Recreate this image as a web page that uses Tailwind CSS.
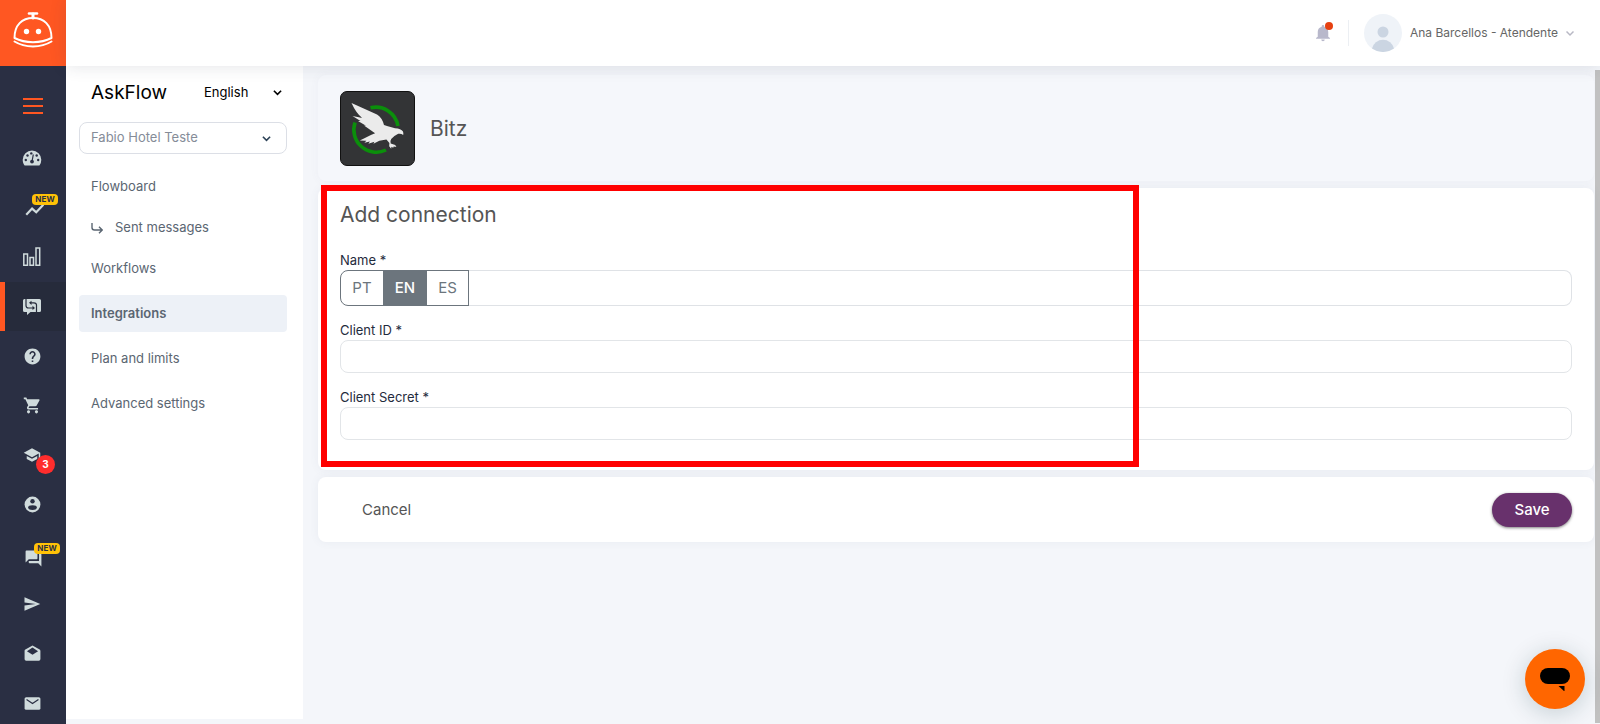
<!DOCTYPE html>
<html lang="en">

<head>
  <meta charset="UTF-8">
  <meta name="viewport" content="width=device-width, initial-scale=1.0">
  <title>AskFlow - Integrations</title>
  <script src="https://cdn.jsdelivr.net/npm/@tailwindcss/browser@4"></script>
</head>

<body class="flex h-screen overflow-hidden bg-[#f4f6fa] font-['Inter','Noto_Sans',sans-serif] text-[13px] text-[#5b6672]">

<!-- Icon sidebar -->
<aside class="flex w-[66px] shrink-0 flex-col overflow-hidden bg-[#2a2f43] text-[#d0dbdc]">
  <a href="#" aria-label="Home" class="flex h-[66px] shrink-0 items-start justify-center bg-[#ff5722] pt-3">
    <svg class="h-9 w-10" viewBox="0 0 40 36" fill="none" stroke="#fff" stroke-width="2" stroke-linecap="round">
      <path d="M16 1.500h8" stroke-width="2.600" />
      <path d="M20 2v4" stroke-width="3" />
      <path d="M1.500 26C1.500 13 9 6 20 6s18.500 7 18.500 20C28 31.500 12 31.500 1.500 26z" stroke-linejoin="round" />
      <path d="M1.500 29.500C12 36 28 36 38.500 29.500" />
      <circle cx="13.500" cy="19.500" r="2.700" fill="#fff" stroke="none" />
      <circle cx="25.500" cy="19.500" r="2.700" fill="#fff" stroke="none" />
    </svg>
  </a>
  <button type="button" aria-label="Toggle menu" class="flex h-[67px] shrink-0 items-center justify-center pt-3">
    <svg class="h-4 w-5" viewBox="0 0 20 16" stroke="#ff5722" stroke-width="2"><path d="M0 1h20M0 8h20M0 15h20" /></svg>
  </button>
  <nav class="-mb-1 flex flex-1 flex-col">
    <a href="#" aria-label="Dashboard" class="flex flex-1 items-center justify-center pr-[2px]">
      <svg class="h-5 w-5" viewBox="0 0 20 20">
        <path fill="currentColor" d="M10 2.500a9.300 9.300 0 0 0-9.300 9.300c0 2 .6 3.900 1.700 5.400.2.300.5.400.8.400h13.600c.3 0 .6-.1.800-.4a9.300 9.300 0 0 0 1.700-5.400A9.300 9.300 0 0 0 10 2.500z" />
        <g fill="#2a2f43">
          <circle cx="5.500" cy="7.500" r="1.200" /><circle cx="3.800" cy="12" r="1.200" /><circle cx="16.200" cy="12" r="1.200" />
          <circle cx="14.700" cy="7.500" r="1.200" /><circle cx="9.300" cy="5.400" r="1.200" /><circle cx="10" cy="13.600" r="1.900" />
        </g>
        <path stroke="#2a2f43" stroke-width="1.200" d="M10 13.500l1.300-7" />
      </svg>
    </a>
    <a href="#" aria-label="Analytics" class="relative flex flex-1 items-center justify-center">
      <svg class="mt-1 ml-1 h-5 w-5" viewBox="0 0 24 24" fill="none" stroke="currentColor" stroke-width="2.600"><path d="M1.500 19l7-7.500 5 4.500L22 7" /></svg>
      <span class="absolute top-[11px] right-2 rounded bg-[#ffc107] px-[3px] text-[8px] leading-[11px] font-bold tracking-wide text-[#2a2f43]">NEW</span>
    </a>
    <a href="#" aria-label="Reports" class="flex flex-1 items-center justify-center pr-[2px]">
      <svg class="h-5 w-5" viewBox="0 0 20 20" fill="none" stroke="currentColor" stroke-width="1.500"><path d="M1.800 7h3.700v11.200H1.800zM8 10.500h3.500v7.700H8zM14 1h3.700v17.200H14z" /></svg>
    </a>
    <a href="#" aria-label="AskFlow" class="flex flex-1 items-center justify-center border-l-5 border-[#ff5722] bg-[#262b3b] pr-[7px]">
      <svg class="h-5 w-5" viewBox="0 0 20 20">
        <path fill="currentColor" d="M2.500 2h15A1.500 1.500 0 0 1 19 3.500v10a1.500 1.500 0 0 1-1.500 1.500H8.500L5 18v-3H2.500A1.500 1.500 0 0 1 1 13.500v-10A1.500 1.500 0 0 1 2.500 2z" />
        <path fill="none" stroke="#262b3b" stroke-width="1.200" d="M4 2v6.500Q4 11 6.500 11H11M14.500 15V8Q14.500 5.800 12 5.800H9" />
        <path fill="#262b3b" d="M10.500 8.800V13l2.500-2zM9.500 3.700V8L7 5.800z" />
      </svg>
    </a>
    <a href="#" aria-label="Help" class="flex flex-1 items-center justify-center pr-[2px]">
      <svg class="h-[19px] w-[19px]" viewBox="0 0 24 24" fill="currentColor"><path d="M12 2C6.480 2 2 6.480 2 12s4.480 10 10 10 10-4.480 10-10S17.520 2 12 2zm1 17h-2v-2h2v2zm2.070-7.750l-.9.920C13.450 12.900 13 13.500 13 15h-2v-.5c0-1.100.45-2.100 1.170-2.830l1.240-1.260c.37-.36.59-.86.59-1.410 0-1.100-.9-2-2-2s-2 .9-2 2H8c0-2.210 1.790-4 4-4s4 1.790 4 4c0 .88-.36 1.680-.93 2.250z" /></svg>
    </a>
    <a href="#" aria-label="Store" class="flex flex-1 items-center justify-center pr-[2px]">
      <svg class="h-[19px] w-[19px]" viewBox="0 0 24 24" fill="currentColor"><path d="M7 18c-1.100 0-1.990.9-1.990 2S5.900 22 7 22s2-.9 2-2-.9-2-2-2zM1 2v2h2l3.600 7.590-1.350 2.450c-.16.28-.25.61-.25.960 0 1.100.9 2 2 2h12v-2H7.420c-.14 0-.25-.11-.25-.25l.03-.12.9-1.630h7.450c.75 0 1.410-.41 1.750-1.030l3.580-6.490c.08-.14.12-.31.12-.480 0-.55-.45-1-1-1H5.210l-.94-2H1zm16 16c-1.100 0-1.990.9-1.990 2s.89 2 1.990 2 2-.9 2-2-.9-2-2-2z" /></svg>
    </a>
    <a href="#" aria-label="Academy" class="relative flex flex-1 items-center justify-center pr-[2px]">
      <svg class="h-[18px] w-[18px]" viewBox="0 0 24 24" fill="currentColor"><path d="M5 13.180v4L12 21l7-3.820v-4L12 17l-7-3.820zM12 3L1 9l11 6 9-4.910V17h2V9L12 3z" /></svg>
      <span class="absolute right-[11px] bottom-[6px] flex h-[19px] w-[19px] items-center justify-center rounded-full bg-[#ff2d2d] text-[10px] font-bold text-white">3</span>
    </a>
    <a href="#" aria-label="Contacts" class="flex flex-1 items-center justify-center pr-[2px]">
      <svg class="h-[19px] w-[19px]" viewBox="0 0 24 24"><path fill="currentColor" d="M12 2a10 10 0 1 0 0 20 10 10 0 0 0 0-20z" /><circle cx="12" cy="8" r="2.800" fill="#2a2f43" /><ellipse cx="12" cy="15.800" rx="5.500" ry="3" fill="#2a2f43" /></svg>
    </a>
    <a href="#" aria-label="Conversations" class="relative flex flex-1 items-center justify-center">
      <svg class="mt-2 h-[19px] w-[19px]" viewBox="0 0 24 24" fill="currentColor"><path d="M21 6h-2v9H6v2c0 .55.45 1 1 1h11l4 4V7c0-.55-.45-1-1-1zm-4 6V3c0-.55-.45-1-1-1H3c-.55 0-1 .45-1 1v14l4-4h10c.55 0 1-.45 1-1z" /></svg>
      <span class="absolute top-[13px] right-[6px] rounded bg-[#ffc107] px-[3px] text-[8px] leading-[11px] font-bold tracking-wide text-[#2a2f43]">NEW</span>
    </a>
    <a href="#" aria-label="Campaigns" class="flex flex-1 items-center justify-center pr-[2px]">
      <svg class="h-[18px] w-[18px]" viewBox="0 0 24 24" fill="currentColor"><path d="M2.010 21L23 12 2.010 3 2 10l15 2-15 2z" /></svg>
    </a>
    <a href="#" aria-label="Drafts" class="flex flex-1 items-center justify-center pr-[2px]">
      <svg class="h-[19px] w-[19px]" viewBox="0 0 24 24"><path fill="currentColor" d="M12 2L3 7q-1 .6-1 1.800V19a2 2 0 0 0 2 2h16a2 2 0 0 0 2-2V8.800Q22 7.600 21 7z" /><path fill="#2a2f43" d="M12 4.500L19 9l-7 4.500L5 9z" /></svg>
    </a>
    <a href="#" aria-label="Mail" class="flex flex-1 items-center justify-center pr-[2px]">
      <svg class="h-[19px] w-[19px]" viewBox="0 0 24 24" fill="currentColor"><path d="M20 4H4a2 2 0 0 0-2 2v12a2 2 0 0 0 2 2h16a2 2 0 0 0 2-2V6a2 2 0 0 0-2-2z" /><path fill="none" stroke="#2a2f43" stroke-width="1.500" d="M4.500 7l7.500 5 7.500-5" /></svg>
    </a>
  </nav>
</aside>

<div class="flex min-w-0 flex-1 flex-col">
  <!-- Top bar -->
  <header class="z-10 flex h-[66px] shrink-0 items-center justify-end bg-white pr-[26px] shadow-[0_0_16px_rgba(50,55,75,0.14)]">
    <button type="button" aria-label="Notifications" class="relative mr-4">
      <svg class="h-[18px] w-[18px]" viewBox="0 0 24 24" fill="#b8b8cb"><path d="M12 23c1.300 0 2.300-.9 2.300-2.200H9.700C9.700 22.100 10.700 23 12 23zm7-6v-6.500c0-3.300-2-6-5.300-6.700V3a1.700 1.700 0 0 0-3.400 0v.8C7 4.500 5 7.200 5 10.500V17l-2.300 1.800v1h18.600v-1z" /></svg>
      <span class="absolute -top-[2px] -right-[1px] h-2 w-2 rounded-full bg-[#e64010]"></span>
    </button>
    <div class="mr-[15px] h-[26px] w-px bg-[#eceff3]"></div>
    <button type="button" class="flex items-center text-xs text-[#666]">
      <svg class="mr-2 h-[38px] w-[38px]" viewBox="0 0 38 38">
        <circle cx="19" cy="19" r="19" fill="#eff3f8" />
        <circle cx="19" cy="18" r="5.500" fill="#cbd5e2" />
        <path fill="#cbd5e2" d="M8 34.500a11.300 11.300 0 0 1 22 0A19 19 0 0 1 8 34.500z" />
      </svg>
      Ana Barcellos - Atendente
      <svg class="ml-2 h-2 w-2" viewBox="0 0 8 8" fill="none" stroke="#b8b8c4" stroke-width="1.500"><path d="M.5 2.500L4 6l3.500-3.500" /></svg>
    </button>
  </header>

  <div class="flex min-h-0 flex-1">
    <!-- AskFlow menu -->
    <aside class="mb-[5px] w-[237px] shrink-0 bg-white pt-[14px] pr-4 pl-[13px]">
      <div class="flex items-center justify-between pr-[5px] pl-3">
        <h1 class="text-[19px] leading-[26px] text-black">AskFlow</h1>
        <div class="relative">
          <select aria-label="Language" class="block w-[78px] appearance-none bg-transparent pb-[2px] leading-5 text-black">
            <option>English</option>
          </select>
          <svg class="pointer-events-none absolute top-1.5 right-0 h-[9px] w-[9px]" viewBox="0 0 10 10" fill="none" stroke="#000" stroke-width="1.800"><path d="M1 3l4 4 4-4" /></svg>
        </div>
      </div>
      <div class="relative mt-4">
        <select aria-label="Hotel" class="block h-8 w-full appearance-none rounded-lg border border-[#dcdfe6] bg-white px-[11px] text-[#858c98]">
          <option>Fabio Hotel Teste</option>
        </select>
        <svg class="pointer-events-none absolute top-3 right-4 h-[9px] w-[9px]" viewBox="0 0 10 10" fill="none" stroke="#2c4257" stroke-width="1.800"><path d="M1 3l4 4 4-4" /></svg>
      </div>
      <nav class="mt-[14px] flex flex-col gap-2">
        <div class="flex flex-col gap-1">
          <a href="#" class="flex h-[37px] items-center px-3">Flowboard</a>
          <a href="#" class="flex h-[37px] items-center px-3">
            <svg class="mr-3 h-3 w-3" viewBox="0 0 12 12" fill="none" stroke="currentColor" stroke-width="1.400"><path d="M1 1v4.500Q1 8 3.500 8H11M8 4.800L11.200 8 8 11.200" /></svg>
            Sent messages
          </a>
          <a href="#" class="flex h-[37px] items-center px-3">Workflows</a>
        </div>
        <a href="#" class="flex h-[37px] items-center rounded-sm bg-[#edf1f7] px-3 font-semibold">Integrations</a>
        <a href="#" class="flex h-[37px] items-center px-3">Plan and limits</a>
        <a href="#" class="flex h-[37px] items-center px-3">Advanced settings</a>
      </nav>
    </aside>

    <!-- Connection form -->
    <main class="min-w-0 flex-1 pt-[9px] pr-px pl-[15px]">
      <form class="flex flex-col gap-[7px]">
        <section class="flex items-center gap-[15px] rounded-lg bg-[#f5f7fb] px-[22px] pt-4 pb-[15px] shadow-[0_0_10px_rgba(90,100,130,0.05)]">
          <svg class="h-[75px] w-[75px]" viewBox="0 0 75 75">
            <rect x=".5" y=".5" width="74" height="74" rx="6.500" fill="#333436" stroke="#111" />
            <path fill="none" stroke="#0b8f0b" stroke-width="3.600" d="M30.500 16.800A22.500 22.500 0 0 1 58 35M15 31.500A22.500 22.500 0 0 0 46 59" />
            <path fill="#ebebeb" d="M11.500 12L37 23.500q5 3 7 10.500l3 1 8 2.200q6 .2 8 3.300.6 1.500.2 3.500-2.200-1.800-5-1.200-4.500 2.200-7 5.200-1.500 2.500-.5 4.500l4.500 1.500 1.200 2-2.700-.5-.5 1.200-1.800-1-.2 2-2-2.500.2-3.200-3-3.500-7 1.200-6 3 1-2-6 2 1.500-2.200-5.500 1.200 2-2-6.500-.2 11-5.500 4.200-1.800L24 34.500l2 .2L18 30l2.500-.1-8-4.900q9 2 9.500 1.800Q16 22 11.500 12z" />
          </svg>
          <h2 class="text-[21px] leading-[30px] text-[#555]">Bitz</h2>
        </section>

        <section class="relative rounded-lg bg-white px-[22px] pt-3 pb-[30px] shadow-[0_0_10px_rgba(90,100,130,0.07)]">
          <h3 class="text-[21px] leading-[30px] text-[#555]">Add connection</h3>
          <div class="mt-[22px] flex flex-col gap-4 text-[#1f2b3d]">
            <div>
              <label for="name" class="mb-[2px] block leading-4">Name *</label>
              <div class="flex h-9 text-[15px] text-[#6c757d]">
                <button type="button" class="w-11 rounded-l-lg border border-[#6c757d]">PT</button>
                <button type="button" class="-ml-px w-11 border border-[#6c757d] bg-[#6c757d] font-medium text-white">EN</button>
                <button type="button" class="-ml-px w-[43px] border border-[#6c757d]">ES</button>
                <input id="name" type="text" class="min-w-0 flex-1 rounded-r-lg border border-l-0 border-[#dfe2e6] px-3">
              </div>
            </div>
            <div>
              <label for="client-id" class="mb-[2px] block leading-4">Client ID *</label>
              <input id="client-id" type="text" class="block h-[33px] w-full rounded-lg border border-[#e2e5e8] px-3">
            </div>
            <div>
              <label for="client-secret" class="mb-[2px] block leading-4">Client Secret *</label>
              <input id="client-secret" type="password" class="block h-[33px] w-full rounded-lg border border-[#e2e5e8] px-3">
            </div>
          </div>
          <!-- Highlight frame -->
          <div class="pointer-events-none absolute -top-[3px] left-[3px] h-[282px] w-[818px] border-6 border-[#f00]"></div>
        </section>

        <section class="flex items-center justify-between rounded-lg bg-white px-[22px] pt-4 pb-[15px] text-[15px] shadow-[0_0_10px_rgba(90,100,130,0.07)]">
          <button type="button" class="px-[22px] text-[#555]">Cancel</button>
          <button type="submit" class="h-[34px] w-20 rounded-full bg-[#68316c] font-medium text-white shadow-[0_1px_3px_rgba(0,0,0,0.5)]">Save</button>
        </section>
      </form>
    </main>

    <!-- Scrollbar thumb -->
    <div class="mt-1 mb-px w-[5px] shrink-0 bg-[#c1c1c1]"></div>
  </div>
</div>

<!-- Chat launcher -->
<button type="button" aria-label="Open chat" class="fixed right-[15px] bottom-[15px] z-20 flex h-[60px] w-[60px] items-center justify-center rounded-full bg-[#ff6600] shadow-[0_4px_24px_rgba(2,50,55,0.2)]">
  <svg class="h-6 w-[30px]" viewBox="0 0 30 24"><rect width="30" height="16" y="1" rx="8" /><path d="M18.500 19h6v5.500z" /></svg>
</button>

</body>

</html>
